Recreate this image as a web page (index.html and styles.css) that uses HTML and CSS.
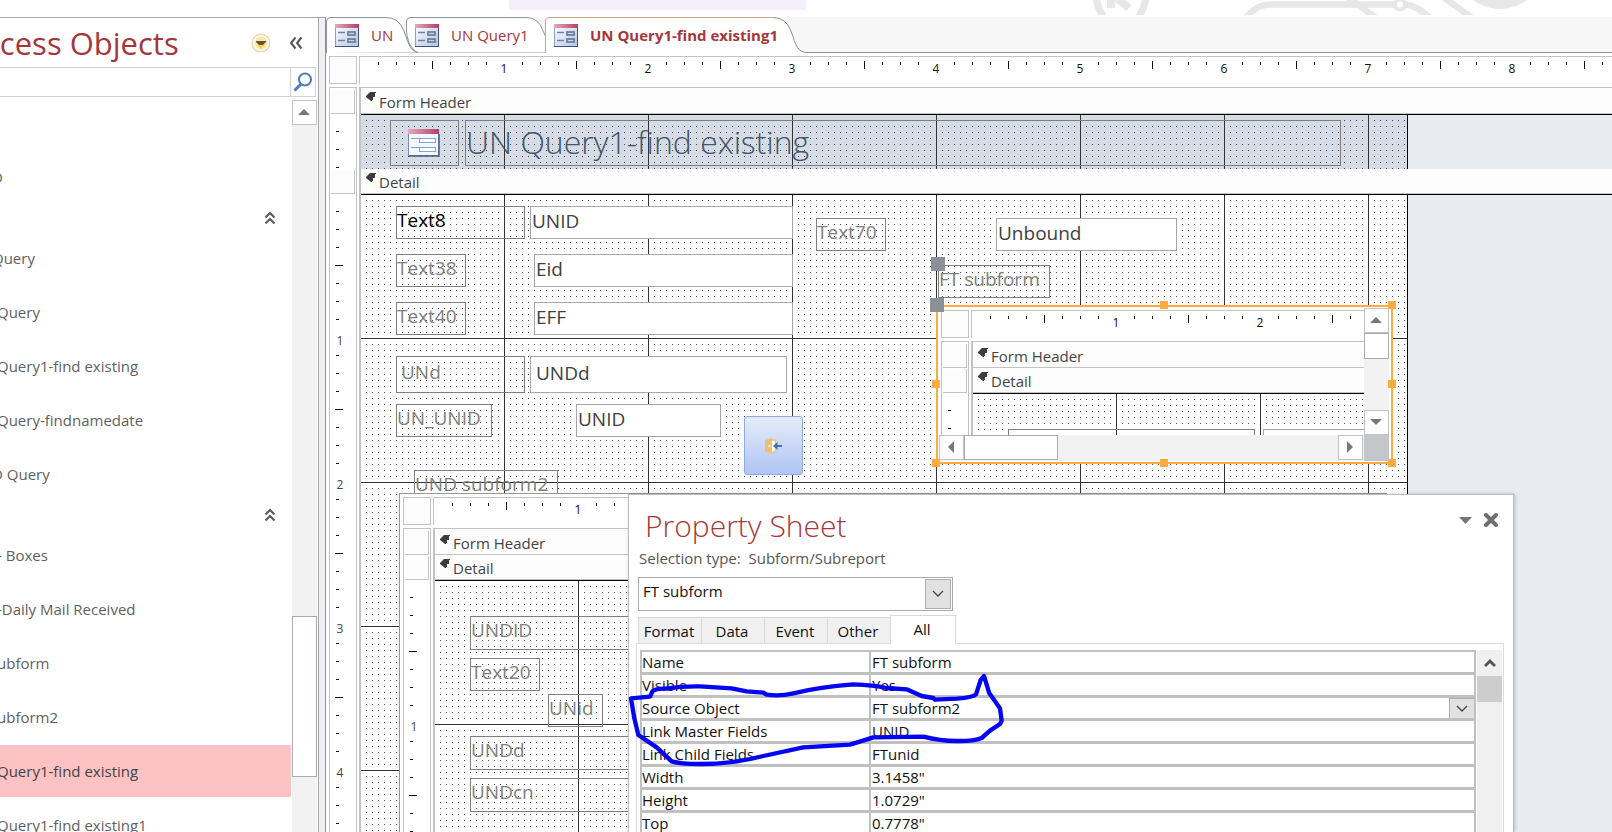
FILE: index.html
```html
<!DOCTYPE html>
<html lang="en">
<head>
<meta charset="utf-8">
<title>Access - UN Query1-find existing1</title>
<link rel="stylesheet" href="styles.css">
</head>
<body>
<svg class="defs" aria-hidden="true">
  <defs>
    <linearGradient id="pink" x1="0" y1="0" x2="1" y2="0"><stop offset="0" stop-color="#e3a9bd"/><stop offset="1" stop-color="#b33f68"/></linearGradient>
    <linearGradient id="paper" x1="0" y1="0" x2="1" y2="1"><stop offset="0" stop-color="#ffffff"/><stop offset="1" stop-color="#b4c3e2"/></linearGradient>
    <symbol id="i-form" viewBox="0 0 24 23">
      <rect x="0.5" y="0.5" width="23" height="22" fill="url(#paper)" stroke="#8ba0c6"/>
      <rect x="0" y="0" width="24" height="4" fill="url(#pink)"/>
      <path d="M0 22.5H24M23.5 4V23" stroke="#3f5478" fill="none"/>
      <path d="M3 8.5H10M3 16.5H10" stroke="#6c82ab" stroke-width="1.4"/>
      <rect x="13" y="8" width="7" height="3" fill="#cfd8ea" stroke="#6f7f9f" stroke-width="1.800"/>
      <rect x="13" y="15" width="7" height="3" fill="#cfd8ea" stroke="#6f7f9f" stroke-width="1.800"/>
    </symbol>
    <symbol id="i-sel" viewBox="0 0 11 11">
      <path d="M4 0H10V1H9V5H7V8H6V9H5L0 5V4L3 1Z" fill="#3c3c3c"/>
    </symbol>
    <symbol id="i-up2" viewBox="0 0 12 14">
      <path d="M1.5 6.5L6 2L10.500 6.5M1.500 12.500L6 8L10.500 12.500" fill="none" stroke="#5c5c66" stroke-width="2.200"/>
    </symbol>
    <symbol id="i-down" viewBox="0 0 12 8">
      <path d="M1 1L6 6L11 1" fill="none" stroke="#444" stroke-width="1.300"/>
    </symbol>
  </defs>
</svg>

<div class="strip">
  <div class="strip-block"></div>
  <svg class="watermark" width="450" height="15" viewBox="0 0 450 15" aria-hidden="true">
    <g fill="none" stroke="#e7e7e7" stroke-width="7">
      <path d="M4 -2Q6 9 12 18M54 -2Q52 9 46 18"/>
      <path d="M19 -6V8M22 -4L37 8" stroke-width="8"/>
      <path d="M153 18Q166 4 178 4.500H302M254 -4L284 18M313 4.500Q324 5 338 18M350 -4L380 18" stroke-width="6.500"/>
      <circle cx="308" cy="4.500" r="5" stroke-width="4"/>
    </g>
    <circle cx="408" cy="-36" r="45" fill="#e7e7e7"/>
  </svg>
</div>

<div class="workspace">
  <aside class="nav">
    <header class="nav-head">
      <h1>ccess Objects</h1>
      <button class="plain" aria-label="Filter objects"><svg width="20" height="20" viewBox="0 0 20 20"><circle cx="10" cy="10" r="8.800" fill="#fffdf0" stroke="#e3dab4" stroke-width="1.500"/><circle cx="10" cy="10" r="6.500" fill="#fbe9a9"/><path d="M6 12H14L10 16Z" fill="#fdd24e"/><path d="M5 8H15V9L12 12H8L5 9Z" fill="#6b4f3a"/></svg></button>
      <button class="plain" aria-label="Collapse pane"><svg width="14" height="14" viewBox="0 0 14 14"><path d="M6.500 1.500L2 7L6.500 12.500M12.500 1.500L8 7L12.500 12.500" fill="none" stroke="#55555c" stroke-width="2"/></svg></button>
    </header>
    <div class="nav-search">
      <input type="text" aria-label="Search objects">
      <button class="plain" aria-label="Search"><svg width="20" height="20" viewBox="0 0 20 20"><circle cx="12" cy="7.500" r="6" fill="none" stroke="#4a7ebb" stroke-width="2"/><path d="M8 12L1.500 18.500" stroke="#4a7ebb" stroke-width="3"/></svg></button>
    </div>
    <div class="nav-body">
      <ul class="nav-list">
        <li class="nav-gap"></li>
        <li><a class="cut" href="#">D</a></li>
        <li class="nav-group"><button class="plain" aria-label="Collapse group"><svg width="12" height="14"><use href="#i-up2"/></svg></button></li>
        <li><a class="cut" href="#">Query</a></li>
        <li><a href="#">Query</a></li>
        <li><a href="#">Query1-find existing</a></li>
        <li><a href="#">Query-findnamedate</a></li>
        <li><a class="cut" href="#">D Query</a></li>
        <li class="nav-group"><button class="plain" aria-label="Collapse group"><svg width="12" height="14"><use href="#i-up2"/></svg></button></li>
        <li><a href="#">- Boxes</a></li>
        <li><a href="#">-Daily Mail Received</a></li>
        <li><a href="#">ubform</a></li>
        <li><a href="#">ubform2</a></li>
        <li><a class="current" href="#">Query1-find existing</a></li>
        <li><a href="#">Query1-find existing1</a></li>
      </ul>
      <div class="nav-scroll">
        <button class="sb-btn" aria-label="Scroll up"><svg width="12" height="6" viewBox="0 0 12 6"><path d="M0 6L6 0L12 6Z" fill="#777"/></svg></button>
        <div class="nav-thumb"></div>
      </div>
    </div>
  </aside>
  <div class="splitter"></div>

  <main class="main">
    <div class="tabs">
      <button class="tab tab-a"><svg class="tab-shape" width="96" height="36" viewBox="0 0 96 36"><path d="M0.500 36V5Q0.500 0.500 5 0.500H60Q73 0.500 78 14C83 29 85 35.500 94 35.500" fill="#fff" stroke="#8c939c"/></svg><svg class="ico" width="24" height="23"><use href="#i-form"/></svg><span>UN</span></button>
      <button class="tab tab-b"><svg class="tab-shape" width="156" height="36" viewBox="0 0 156 36"><path d="M12 35.500Q8 33 3 22Q0.500 18 0.500 14V5Q0.500 0.500 5 0.500H120Q133 0.500 138 14L140 19V35.500Z" fill="#fff" stroke="none"/><path d="M12 35.500Q8 35 3 26Q0.500 18 0.500 14V5Q0.500 0.500 5 0.500H120Q133 0.500 137 14L140 20" fill="none" stroke="#8c939c"/></svg><svg class="ico" width="24" height="23"><use href="#i-form"/></svg><span>UN Query1</span></button>
      <button class="tab tab-c"><svg class="tab-shape" width="264" height="36" viewBox="0 0 264 36"><path d="M0.500 36V5Q0.500 0.500 5 0.500H228Q241 0.500 246 14C251 29 253 35.500 262 35.500V36Z" fill="#fff"/><path d="M0.500 36V5Q0.500 0.500 5 0.500H228" fill="none" stroke="#c9a58c"/><path d="M228 0.500Q241 0.500 246 14C251 29 253 35.500 262 35.500" fill="none" stroke="#8c939c"/></svg><svg class="ico" width="24" height="23"><use href="#i-form"/></svg><span>UN Query1-find existing1</span></button>
    </div>

    <div class="design design-main">
      <div class="corner"></div>
      <div class="hruler"><span>1</span><span>2</span><span>3</span><span>4</span><span>5</span><span>6</span><span>7</span><span>8</span></div>
      <div class="vruler">
        <div class="vsel vsel-first"></div>
        <div class="vticks vticks-head"></div>
        <div class="vsel"></div>
        <div class="vticks vticks-fill"><span>1</span><span>2</span><span>3</span><span>4</span></div>
      </div>
      <div class="sections">
        <div class="bar bar-first bar-line"><svg width="11" height="11"><use href="#i-sel"/></svg>Form Header</div>
        <div class="band band-head">
          <div class="grid grid-blue">
            <div class="ctl logo"><svg width="32" height="28" viewBox="0 0 32 28"><rect x="0.500" y="1" width="30" height="25.500" fill="#f4f8fe" stroke="#7a8fb4"/><rect x="0" y="0" width="31" height="5" fill="url(#pink)"/><path d="M1 27H31V5" fill="none" stroke="#4d5f80" stroke-width="1.500"/><path d="M3 9.500H11M3 18.500H11" stroke="#7fa3d6"/><rect x="11.500" y="9.500" width="16" height="4" fill="#fff" stroke="#7fa3d6"/><rect x="11.500" y="18.500" width="16" height="4" fill="#fff" stroke="#7fa3d6"/></svg></div>
            <div class="ctl form-title">UN Query1-find existing</div>
          </div>
        </div>
        <div class="bar bar-line"><svg width="11" height="11"><use href="#i-sel"/></svg>Detail</div>
        <div class="band band-fill">
          <div class="grid">
            <label class="ctl lbl dark c-text8" for="f-unid">Text8</label><input class="ctl box c-unid" id="f-unid" value="UNID">
            <label class="ctl lbl c-text38" for="f-eid">Text38</label><input class="ctl box c-eid" id="f-eid" value="Eid">
            <label class="ctl lbl c-text40" for="f-eff">Text40</label><input class="ctl box c-eff" id="f-eff" value="EFF">
            <label class="ctl lbl inset c-und" for="f-undd">UNd</label><input class="ctl box inset c-undd" id="f-undd" value="UNDd">
            <label class="ctl lbl c-ununid" for="f-unid2">UN_UNID</label><input class="ctl box c-unid2" id="f-unid2" value="UNID">
            <label class="ctl lbl c-text70" for="f-unb">Text70</label><input class="ctl box c-unb" id="f-unb" value="Unbound">
            <button class="ctl door" aria-label="Close form"><svg width="18" height="16" viewBox="0 0 18 16"><path d="M7 2H10.500V14H7" fill="#fff" stroke="#ecc27e" stroke-width="1.500"/><path d="M0 2L7 0V16L0 14Z" fill="#ecbf78"/><circle cx="4.500" cy="8" r="1" fill="#fff"/><path d="M8 8L12.500 4V7H17V9H12.500V12Z" fill="#3f73b5"/></svg></button>
            <div class="ctl lbl c-undsub">UND subform2</div>
            <div class="ctl lbl c-ftsub">FT subform</div>
            <i class="grip c-grip1"></i>

            <section class="ft" aria-label="FT subform">
              <div class="ft-view">
                <div class="design">
                  <div class="corner"></div>
                  <div class="hruler"><span>1</span><span>2</span></div>
                  <div class="vruler"><div class="vsel vsel-first"></div><div class="vsel vsel-next"></div><div class="vticks vticks-fill"></div></div>
                  <div class="sections">
                    <div class="bar bar-first"><svg width="11" height="11"><use href="#i-sel"/></svg>Form Header</div>
                    <div class="bar bar-line"><svg width="11" height="11"><use href="#i-sel"/></svg>Detail</div>
                    <div class="band band-fill"><div class="grid"><div class="ctl lbl c-ftl"></div><div class="ctl box c-ftb"></div></div></div>
                  </div>
                </div>
              </div>
              <div class="ft-vs">
                <button class="sb-btn" aria-label="Scroll up"><svg width="12" height="6" viewBox="0 0 12 6"><path d="M0 6L6 0L12 6Z" fill="#777"/></svg></button>
                <div class="ft-vthumb"></div>
                <button class="sb-btn end" aria-label="Scroll down"><svg width="12" height="6" viewBox="0 0 12 6"><path d="M0 0L6 6L12 0Z" fill="#777"/></svg></button>
              </div>
              <div class="ft-hs">
                <button class="sb-btn" aria-label="Scroll left"><svg width="6" height="12" viewBox="0 0 6 12"><path d="M6 0L0 6L6 12Z" fill="#777"/></svg></button>
                <div class="ft-hthumb"></div>
                <button class="sb-btn end" aria-label="Scroll right"><svg width="6" height="12" viewBox="0 0 6 12"><path d="M0 0L6 6L0 12Z" fill="#777"/></svg></button>
              </div>
              <div class="ft-corner"></div>
              <i class="knob k-t"></i><i class="knob k-tr"></i><i class="knob k-l"></i><i class="knob k-r"></i><i class="knob k-bl"></i><i class="knob k-b"></i><i class="knob k-br"></i>
            </section>
            <i class="grip c-grip2"></i>

            <section class="und" aria-label="UND subform2">
              <div class="design">
                <div class="corner"></div>
                <div class="hruler"><span>1</span></div>
                <div class="vruler"><div class="vsel vsel-first"></div><div class="vsel vsel-next"></div><div class="vticks vticks-fill"><span>1</span></div></div>
                <div class="sections">
                  <div class="bar bar-first"><svg width="11" height="11"><use href="#i-sel"/></svg>Form Header</div>
                  <div class="bar bar-line"><svg width="11" height="11"><use href="#i-sel"/></svg>Detail</div>
                  <div class="band band-fill"><div class="grid">
                    <div class="ctl lbl c-s1">UNDID</div>
                    <div class="ctl lbl c-s2">Text20</div>
                    <div class="ctl lbl c-s3">UNid</div>
                    <div class="ctl lbl c-s4">UNDd</div>
                    <div class="ctl lbl c-s5">UNDcn</div>
                  </div></div>
                </div>
              </div>
            </section>
          </div>
        </div>
      </div>
    </div>
  </main>

  <section class="sheet" aria-label="Property Sheet">
    <header class="sheet-head">
      <h2>Property Sheet</h2>
      <button class="plain" aria-label="Menu"><svg width="13" height="7" viewBox="0 0 13 7"><path d="M0 0H13L6.500 7Z" fill="#777"/></svg></button>
      <button class="plain" aria-label="Close"><svg width="14" height="14" viewBox="0 0 14 14"><path d="M2 2L12 12M12 2L2 12" stroke="#6e6e6e" stroke-width="4" stroke-linecap="round"/></svg></button>
    </header>
    <p class="sheet-type">Selection type:&nbsp; Subform/Subreport</p>
    <div class="combo">
      <select aria-label="Object"><option>FT subform</option></select>
      <span class="combo-btn"><svg width="12" height="8"><use href="#i-down"/></svg></span>
    </div>
    <div class="sheet-tabs" role="tablist">
      <button role="tab">Format</button><button role="tab">Data</button><button role="tab">Event</button><button role="tab">Other</button><button role="tab" class="on" aria-selected="true">All</button>
    </div>
    <div class="sheet-page">
      <table class="props">
        <tbody>
          <tr><th scope="row">Name</th><td>FT subform</td></tr>
          <tr><th scope="row">Visible</th><td>Yes</td></tr>
          <tr><th scope="row">Source Object</th><td><div class="cell">FT subform2<button class="drop" aria-label="Choose source object"><svg width="12" height="8"><use href="#i-down"/></svg></button></div></td></tr>
          <tr><th scope="row">Link Master Fields</th><td>UNID</td></tr>
          <tr><th scope="row">Link Child Fields</th><td>FTunid</td></tr>
          <tr><th scope="row">Width</th><td>3.1458"</td></tr>
          <tr><th scope="row">Height</th><td>1.0729"</td></tr>
          <tr><th scope="row">Top</th><td>0.7778"</td></tr>
        </tbody>
      </table>
      <div class="sheet-scroll">
        <button class="plain" aria-label="Scroll up"><svg width="12" height="10" viewBox="0 0 12 10"><path d="M1 8L6 3L11 8" fill="none" stroke="#555" stroke-width="3"/></svg></button>
        <div class="sheet-thumb"></div>
      </div>
    </div>
    <svg class="ink" width="400" height="300" viewBox="24 42 1200 900" aria-hidden="true">
      <path d="M33 655L90 650L98 633Q110 625 135 626Q190 618 240 619L335 625L380 634L430 638L440 644Q480 650 520 640Q600 620 700 613Q760 615 800 624L860 628L905 648L940 654L945 659L1010 656Q1060 652 1068 643L1082 600L1092 588L1108 640L1140 685L1145 722L1140 732L1110 752L1085 774Q1060 784 1010 783Q960 783 910 770L760 772L690 794L550 802L430 828Q340 852 240 852Q180 852 155 844L110 802L55 765L43 715Z" fill="none" stroke="#0404f4" stroke-width="13" stroke-linejoin="round"/>
    </svg>
  </section>
</div>
</body>
</html>
```
FILE: styles.css
```css
:root {
  --rule: #c3c3c3;
  --edge: #8c939c;
  --red: #a4373a;
}
* { box-sizing: border-box; }
body {
  margin: 0;
  height: 100vh;
  display: flex;
  flex-direction: column;
  overflow: hidden;
  background: #fff;
  font-family: "Open Sans", "Noto Sans", sans-serif;
  font-size: 15px;
  color: #444;
}
button, input, select { font: inherit; color: inherit; margin: 0; padding: 0; }
button { border: 0; background: none; }
h1, h2, p, ul { margin: 0; padding: 0; font-weight: 400; list-style: none; }
svg { display: block; flex: none; }
.defs { position: absolute; width: 0; height: 0; }
.plain { display: flex; align-items: center; justify-content: center; }

.strip { flex: none; height: 17px; display: flex; }
.strip-block { width: 297px; height: 10px; margin-left: 509px; background: #f5effc; }
.watermark { margin-left: 286px; }

.workspace { flex: 1; min-height: 0; display: flex; position: relative; }

/* Navigation pane */
.nav {
  flex: none;
  width: 319px;
  display: flex;
  flex-direction: column;
  border: solid #a3a6ad;
  border-width: 1px 1px 0 0;
}
.nav-head { flex: none; height: 49px; display: flex; align-items: center; gap: 18px; padding-right: 15px; }
.nav-head h1 { flex: 1; font-size: 31px; line-height: 48px; color: var(--red); white-space: nowrap; text-indent: -15px; }
.nav-search { flex: none; height: 30px; margin-right: 2px; display: flex; border: solid #d2d2d2; border-width: 1px 1px 1px 0; }
.nav-search input { flex: 1; min-width: 0; border: 0; border-right: 1px solid #d2d2d2; }
.nav-search button { width: 24px; }
.nav-body { flex: 1; min-height: 0; display: flex; }
.nav-list { flex: 1; min-width: 0; overflow: hidden; color: #5f5f5f; }
.nav-list li { height: 54px; padding: 1px 1px 1px 0; }
.nav-list a { display: block; line-height: 52px; color: inherit; text-decoration: none; text-indent: -3px; white-space: nowrap; }
.nav-list a.cut { text-indent: -8px; }
.nav-list a.current { background: #fcc2c4; color: #444; }
.nav-list .nav-gap { height: 53px; }
.nav-list .nav-group { height: 27px; display: flex; justify-content: flex-end; padding-right: 16px; }
.nav-scroll { flex: none; width: 25px; margin: 3px 1px 0 0; background: #f2f2f2; display: flex; flex-direction: column; }
.nav-thumb { height: 161px; margin-top: 491px; border: 1px solid #a9abae; background: #fff; }
.sb-btn { flex: none; width: 25px; height: 25px; border: 1px solid #c3c3c3; background: #fff; display: flex; align-items: center; justify-content: center; padding: 0 1px 1px 0; }
.splitter { flex: none; width: 7px; border-right: 1px solid var(--edge); border-top: 1px solid #a3a6ad; background: #eef0f4; }

/* Document tabs */
.main { flex: 1; min-width: 0; display: flex; flex-direction: column; }
.tabs { flex: none; height: 36px; display: flex; background: #f7f7f7; border-bottom: 1px solid var(--edge); color: var(--red); }
.tab { position: relative; height: 36px; display: flex; align-items: center; gap: 12px; padding-left: 9px; white-space: nowrap; text-align: left; }
.tab span, .tab .ico { position: relative; }
.tab-shape { position: absolute; left: 0; top: 0; }
.tab-a { width: 80px; }
.tab-b { width: 139px; }
.tab-c { width: 264px; font-weight: 700; z-index: 1; }

/* Form designer: rulers around stacked sections */
.design { flex: 1; min-height: 0; height: 100%; display: grid; grid-template: 28px 1fr / 28px 1fr; gap: 3px 2px; background: #fff; overflow: hidden; }
.design-main { padding: 3px 0 0 3px; }
.corner { border: 1px solid var(--rule); background: #fdfdfd; }
.hruler {
  display: flex;
  overflow: hidden;
  padding: 4px 0 0 72px;
  border: solid var(--rule);
  border-width: 1px 0 0 1px;
  font-size: 12px;
  line-height: 16px;
  color: #111;
  background:
    linear-gradient(#fff, #fff) 0 0 / 12px 100% no-repeat,
    linear-gradient(90deg, #111 1px, transparent 1px) 73px 5px / 144px 8px repeat-x,
    linear-gradient(90deg, #111 1px, transparent 1px) 19px 6px / 18px 3px repeat-x,
    #fff;
  background-origin: border-box;
}
.hruler span, .vticks span { flex: none; display: flex; justify-content: center; width: 144px; height: 18px; }
.hruler span { background: linear-gradient(#fff, #fff) center / 9px 18px no-repeat; }
.vruler { display: flex; flex-direction: column; overflow: hidden; border: solid var(--rule); border-width: 1px 1px 0; background: #fff; }
.vsel { flex: none; height: 26px; margin: 0 1px; border: solid var(--rule); border-width: 0 1px 0 0; background: linear-gradient(var(--rule), var(--rule)) 0 24px / 100% 1px no-repeat #fdfdfd; clip-path: inset(1px 0 1px); }
.vsel-first { height: 27px; background-position: 0 25px; clip-path: inset(2px 0 1px); }
.vsel-next { margin-top: -1px; }
.vticks {
  background:
    linear-gradient(#111 1px, transparent 1px) 5px 70px / 8px 144px repeat-y,
    linear-gradient(#111 1px, transparent 1px) 6px 16px / 3px 18px repeat-y;
  overflow: hidden;
}
.vticks-head { flex: none; height: 54px; }
.vticks-fill { flex: 1; min-height: 0; padding-top: 73px; font-size: 12px; }
.vticks span { width: 20px; height: 144px; align-items: center; background: linear-gradient(#fff, #fff) center / 20px 12px no-repeat; }
.sections { display: flex; flex-direction: column; min-width: 0; min-height: 0; overflow: hidden; border-left: 2px solid var(--rule); background: #fff; }
.bar { flex: none; height: 25px; display: flex; align-items: center; gap: 2px; padding: 0 0 0 5px; line-height: 20px; background: #fdfdfd; border-bottom: 1px solid var(--rule); white-space: nowrap; }
.bar svg { align-self: flex-start; margin-top: 4px; }
.bar-first { height: 27px; padding-top: 2px; border-top: 1px solid var(--rule); }
.bar-first svg { margin-top: 4px; }
.bar-line { height: 26px; border-bottom: 0; box-shadow: inset 0 -1px #000, inset 0 -2px var(--rule); }
.bar-first.bar-line { height: 28px; padding-top: 0; }
.band { min-height: 0; background: #e8ebf0; display: flex; }
.band-head { flex: none; height: 54px; }
.band-fill { flex: 1; }
.grid {
  --paper: #fff;
  position: relative;
  flex: none;
  width: 100%;
  background:
    linear-gradient(90deg, #333 1px, transparent 1px) 143px 0 / 144px 144px,
    linear-gradient(#333 1px, transparent 1px) 0 143px / 144px 144px,
    linear-gradient(90deg, var(--paper) 5px, transparent 5px) 0 0 / 6px 6px,
    linear-gradient(var(--paper) 5px, #444 5px) 0 0 / 6px 6px;
}
.design-main > .sections > .band > .grid { width: 1047px; border-right: 1px solid #000; }
.grid-blue { --paper: #d5dce6; }

/* Controls placed freely on the form canvas */
.ctl { position: absolute; height: 33px; font-size: 19px; line-height: 24px; white-space: nowrap; }
.lbl { border: 1px solid #7f7f7f; color: #7f7f7f; padding: 1px 0 0 0; }
.lbl.dark { color: #000; }
.lbl.inset { padding: 3px 0 0 4px; }
.box { border: 1px solid #a6a6a6; background: #fff; color: #404040; padding: 0 0 3px 1px; border-radius: 0; }
.box.inset { padding-left: 5px; }
.logo { left: 29px; top: 5px; width: 69px; height: 46px; padding-right: 2px; border: 1px solid #7f7f7f; display: flex; align-items: center; justify-content: center; }
.form-title { left: 104px; top: 5px; width: 876px; height: 46px; border: 1px solid #7f7f7f; font-size: 32px; font-weight: 300; line-height: 42px; color: #44546a; }
.c-text8 { left: 35px; top: 11px; width: 129px; }
.c-unid { left: 169px; top: 11px; width: 263px; }
.c-text38 { left: 35px; top: 59px; width: 70px; }
.c-eid { left: 173px; top: 59px; width: 259px; }
.c-text40 { left: 35px; top: 107px; width: 70px; }
.c-eff { left: 173px; top: 107px; width: 259px; }
.c-und { left: 35px; top: 161px; width: 129px; height: 37px; }
.c-undd { left: 169px; top: 161px; width: 257px; height: 37px; }
.c-ununid { left: 35px; top: 209px; width: 96px; }
.c-unid2 { left: 215px; top: 209px; width: 145px; }
.c-text70 { left: 455px; top: 23px; width: 70px; }
.c-unb { left: 635px; top: 23px; width: 181px; }
.c-undsub { left: 53px; top: 275px; width: 144px; }
.c-ftsub { left: 577px; top: 70px; width: 112px; }
.c-ftl { left: 35px; top: 35px; width: 247px; }
.c-ftb { left: 290px; top: 35px; width: 200px; }
.c-s1 { left: 35px; top: 35px; width: 400px; height: 34px; }
.c-s2 { left: 35px; top: 77px; width: 70px; }
.c-s3 { left: 113px; top: 113px; width: 55px; }
.c-s4 { left: 35px; top: 155px; width: 400px; height: 34px; }
.c-s5 { left: 35px; top: 197px; width: 400px; height: 34px; }
.door { left: 383px; top: 221px; width: 59px; height: 59px; display: flex; align-items: center; justify-content: center; border: 1px solid #8faadc; border-radius: 3px; background: linear-gradient(#e5ebfa, #b0c5f3); }
.grip { position: absolute; width: 14px; height: 14px; background: #8a8f98; }
.c-grip1 { left: 570px; top: 62px; }
.c-grip2 { left: 569px; top: 103px; }

/* Selected subform */
.ft {
  position: absolute;
  left: 575px;
  top: 110px;
  width: 457px;
  height: 159px;
  display: grid;
  grid-template: 1fr 26px / 1fr 25px;
  padding: 1px 2px 1px 1px;
  border: 2px solid #ffab40;
  background: #fff;
}
.ft-view { min-width: 0; min-height: 0; padding: 2px 0 0 2px; }
.ft-vs { background: #f2f2f2; display: flex; flex-direction: column; }
.ft-vthumb { height: 26px; border: 1px solid #ababab; background: #fff; }
.end { margin-top: auto; }
.ft-hs { background: #f2f2f2; display: flex; }
.ft-hthumb { width: 94px; height: 25px; border: 1px solid #ababab; background: #fff; }
.ft-hs .end { margin: 0 1px 0 auto; }
.ft-corner { background: #c3c6cb; }
.knob { position: absolute; width: 8px; height: 8px; background: #ffab40; }
.k-t { left: 222px; top: -6px; }
.k-tr { right: -5px; top: -6px; }
.k-l { left: -6px; top: 73px; }
.k-r { right: -5px; top: 73px; }
.k-bl { left: -6px; bottom: -5px; }
.k-b { left: 222px; bottom: -5px; }
.k-br { right: -5px; bottom: -5px; }

.und { position: absolute; left: 38px; top: 298px; right: 20px; bottom: 0; padding: 3px 0 0 3px; border: solid #999; border-width: 1px 0 0 1px; background: #fff; }

/* Property sheet window */
.sheet {
  position: absolute;
  left: 628px;
  top: 477px;
  bottom: 0;
  width: 886px;
  display: flex;
  flex-direction: column;
  border: solid #bdbdbd;
  border-width: 1px 1px 0;
  background: #fff;
  box-shadow: 1px 0 4px rgba(0, 0, 0, .2);
  color: #111;
}
.sheet-head { flex: none; display: flex; align-items: flex-start; gap: 12px; padding: 8px 15px 0 16px; height: 52px; }
.sheet-head h2 { flex: 1; font-size: 30px; line-height: 45px; font-weight: 300; color: var(--red); }
.sheet-head button { height: 34px; }
.sheet-type { padding-left: 10px; line-height: 22px; color: #555; }
.combo { position: relative; flex: none; width: 315px; height: 34px; margin: 8px 0 0 9px; }
.combo select { appearance: none; width: 100%; height: 100%; padding: 0 30px 6px 4px; border: 1px solid #acacac; border-radius: 0; background: #fff; color: #111; }
.combo-btn { position: absolute; right: 2px; top: 2px; width: 26px; height: 30px; border: 1px solid #adadad; background: #e1e1e1; display: flex; align-items: center; justify-content: center; pointer-events: none; }
.sheet-tabs { flex: none; display: flex; align-items: flex-end; height: 32px; margin-left: 9px; }
.sheet-tabs button { width: 63px; height: 26px; padding-right: 2px; border: solid #d9d9d9; border-width: 1px 0 0 1px; background: #f0f0f0; line-height: 24px; }
.sheet-tabs button.on { width: 66px; height: 29px; margin-bottom: -1px; border-right-width: 1px; background: #fff; position: relative; padding-bottom: 3px; }
.sheet-page { flex: 1; min-height: 0; display: flex; align-items: flex-start; overflow: hidden; margin: 0 9px 0 7px; padding: 6px 0 0 3px; border: solid #dcdcdc; border-width: 1px 1px 0; }
.props { flex: 1; table-layout: fixed; border-collapse: separate; border-spacing: 0; border: solid #c0c0c0; border-width: 2px 2px 0; background: #fff; }
.props th, .props td { height: 23px; padding: 0 0 0 1px; border-bottom: 3px solid #c0c0c0; line-height: 20px; text-align: left; font-weight: 400; }
.props th { width: 229px; padding-left: 0; border-right: 2px solid #c0c0c0; }
.cell { display: flex; justify-content: space-between; }
.drop { width: 25px; height: 20px; border: solid #adadad; border-width: 1px 0 0 1px; background: #e1e1e1; display: flex; align-items: center; justify-content: center; }
.sheet-scroll { align-self: stretch; flex: none; width: 25px; margin: 0 1px; background: #f0f0f0; }
.sheet-scroll button { width: 25px; height: 26px; }
.sheet-thumb { height: 26px; background: #cdcdcd; }
.ink { position: absolute; left: -1px; top: -1px; pointer-events: none; }
```
